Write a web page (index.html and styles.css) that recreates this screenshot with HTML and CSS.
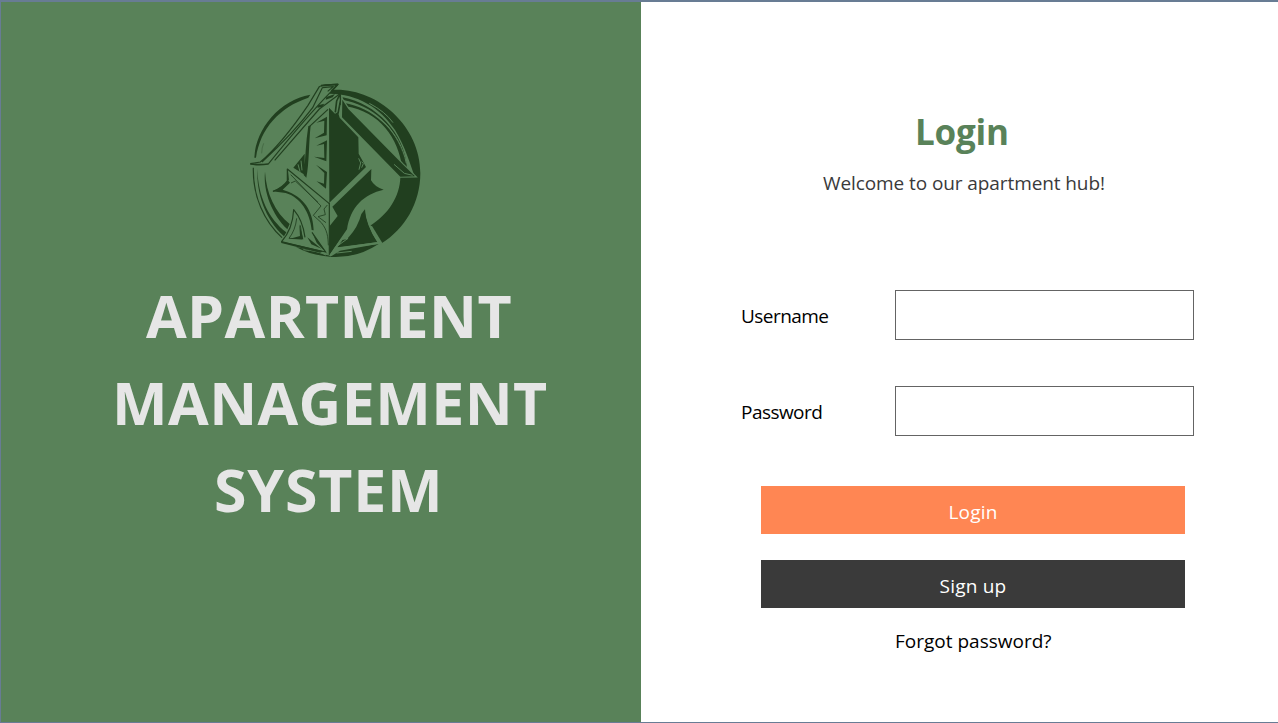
FILE: index.html
```html
<!DOCTYPE html>
<html lang="en">
<head>
<meta charset="utf-8">
<title>Apartment Management System</title>
<link rel="stylesheet" href="styles.css">
</head>
<body>
<div class="window">
  <section class="brand">
    <svg class="logo" viewBox="0 0 570 570" aria-hidden="true">
      <!-- right side of the ring -->
      <path class="ink" d="M270 45C400 32 541 145 541 294C541 385 494 462 425 505L388 454C445 418 480 365 481 306L524 304C511 270 497 217 465 165C420 96 350 57 270 56Z"/>
      <path class="ink" d="M308 67C410 87 494 175 501 279L487 279C475 190 420 110 318 94L311 83C398 98 472 165 491 245C471 156 397 90 306 74Z"/>
      <path class="cut thin" d="M388 85Q436 110 459 143M312 78C408 100 480 170 499 265"/>
      <!-- left side of the ring -->
      <path class="ink" d="M211 59C120 75 47 160 43 248L48 248C61 160 118 97 205 68Z"/>
      <path class="line faint" d="M65 235Q65 218 71 205M118 117Q150 84 183 73"/>
      <path class="line thin" d="M40 278C38 365 73 440 126 488"/>
      <path class="ink" d="M52 281C54 365 86 431 139 472L132 484C75 431 49 355 52 281Z"/>
      <path class="ink" d="M75 290C79 355 105 411 149 447L142 463C96 418 69 350 75 290Z"/>
      <!-- lower ring -->
      <path class="ink" d="M168 516Q213 523 260 540L275 543L300 527L417 506Q350 550 275 546Q212 541 168 516Z"/>
      <path class="cut thin" d="M190 524Q230 527 258 540M290 534L335 529"/>
      <!-- left blade -->
      <path class="shape" d="M31 267L61 261C111 219 163 151 204 91L238 32Q246 26 294 28Q283 41 274 49C213 111 151 185 84 268Q59 272 31 267Z"/>
      <path class="line thin" d="M31 266L61 261C111 219 163 151 204 91L238 35Q246 28 294 28Q283 41 274 49C213 111 151 185 84 268M247 38L280 35L263 49M247 38L218 98Q160 175 66 261M74 253L96 230"/>
      <path class="line" d="M31 267Q58 271 84 267M243 32L293 28L274 48"/>
      <path class="ink" d="M259 66L285 57L278 67L257 74ZM234 91L253 86L246 96L232 98Z"/>
      <path class="line thin" d="M104 256L238 102L299 57"/>
      <path class="line" d="M286 112L290 78L300 57L302 74L294 116"/>
      <!-- right blade -->
      <path class="ink edge" d="M307 74L325 102L488 268L525 304L481 305L306 127Z"/>
      <path class="cut thin" d="M462 268L493 295L518 301"/>
      <circle class="ink" cx="300" cy="87" r="3"/>
      <!-- helmet -->
      <path class="ink" d="M267 98L285 116L294 112L299 128L355 187L356 236L378 276L268 383Z"/>
      <path class="cut thin" d="M356 250L362 264L357 284M365 260L370 266L365 278"/>
      <path class="line thin" d="M264 103L208 155"/>
      <path class="ink" d="M205 153L212 152C206 200 208 266 199 308L191 300C197 250 197 200 205 153ZM194 236L194 299L160 278Z"/>
      <path class="cut thin" d="M174 268L180 290M183 257L186 286"/>
      <path class="ink" d="M229 143L261 125L260 181L224 190L252 173L253 137ZM229 212L261 196L259 259L222 245L253 249L252 207ZM228 269L261 291L258 341L230 319L252 326L253 294Z"/>
      <!-- left mask -->
      <path class="shape" d="M142 282L268 390V536L219 466C216 416 192 376 138 356L99 349Q128 339 145 314Z"/>
      <path class="line thin" d="M142 320V282L268 386M142 284L145 314Q128 339 99 349"/>
      <path class="line hair" d="M152 299L243 393L220 421L244 443C262 465 264 485 265 511M153 324L166 318L234 382M262 390L252 402L256 419L234 425L258 443"/>
      <path class="ink" d="M97 349Q128 338 144 316L150 323L128 344L145 350C201 372 220 420 221 466L215 465C210 413 182 367 137 354Z"/>
      <path class="line thin" d="M268 383V540"/>
      <!-- right mask -->
      <path class="ink" d="M394 282L393 316Q405 337 431 344C371 357 331 397 321 463L303 489L269 539V453L293 423L277 395Z"/>
      <!-- left lower horn -->
      <path class="shape" d="M160 402C156 446 145 477 124 501L257 531L216 472L195 465Q176 428 160 402Z"/>
      <path class="line thin" d="M124 501C145 477 159 446 161 404Q188 435 195 487M124 501L257 531L216 472"/>
      <path class="line hair" d="M170 430Q166 466 147 490L187 492L181 451"/>
      <path class="ink" d="M178 448L190 493L150 491L180 483ZM202 487L244 521L214 508ZM218 476L264 539L230 503ZM124 498L250 529L240 533L124 504Z"/>
      <!-- right lower horn -->
      <path class="ink" d="M376 401C377 431 391 468 413 501L286 519L307 493L324 489Q354 457 364 417Z"/>
      <path class="cut" d="M378 401C379 431 393 468 417 504L282 521M324 489L306 492L270 543"/>
      <path class="cut thin" d="M292 513L324 490"/>
      <path class="cut" d="M393 454L425 506"/>
    </svg>
    <h1 class="title">
      <span class="line-one">APARTMENT</span>
      <span class="line-two">MANAGEMENT</span>
      <span class="line-three">SYSTEM</span>
    </h1>
  </section>
  <main class="panel">
    <h2 class="heading">Login</h2>
    <p class="welcome">Welcome to our apartment hub!</p>
    <form class="form">
      <div class="field">
        <label class="label" for="user">Username</label>
        <input class="input" id="user" type="text">
      </div>
      <div class="field">
        <label class="label" for="pass">Password</label>
        <input class="input" id="pass" type="password">
      </div>
      <button class="button login" type="button">Login</button>
      <button class="button signup" type="button">Sign up</button>
      <a class="forgot">Forgot password?</a>
    </form>
  </main>
</div>
</body>
</html>
```
FILE: styles.css
```css
* { box-sizing: border-box; }
body {
  margin: 0;
  background: #fff;
  font-family: "Segoe UI", "Open Sans", "Noto Sans", sans-serif;
  font-size: 19px;
  color: #000;
}
.window {
  display: flex;
  width: 1278px;
  height: 723px;
  border: solid #687c94;
  border-width: 2px 0 1px 1px;
  overflow: hidden;
}
.brand {
  width: 640px;
  background: #598259;
  padding-top: 73px;
}
.logo { display: block; width: 190px; height: 190px; margin-left: 239px; }
.ink { fill: #213f1f; }
.shape { fill: #598259; }
.line { fill: none; stroke: #213f1f; stroke-width: 5; stroke-linejoin: round; }
.line.thin { stroke-width: 3.5; }
.line.hair { stroke-width: 2.5; }
.line.faint { stroke-width: 2; opacity: .5; }
.cut { fill: none; stroke: #598259; stroke-width: 6; }
.cut.thin { stroke-width: 3; }
.edge { stroke: #598259; stroke-width: 7; paint-order: stroke; }
.title {
  margin: 7px 0 0;
  font-size: 59px;
  line-height: 87px;
  font-weight: 700;
  letter-spacing: 0.4px;
  color: #e6e6e6;
}
.title span { display: block; white-space: nowrap; }
.line-one { margin-left: 145px; }
.line-two { margin-left: 111px; }
.line-three { margin-left: 213px; letter-spacing: 0.8px; }
.panel { width: 637px; padding-top: 104px; }
.heading {
  margin: 0 0 0 274px;
  font-size: 35px;
  line-height: 52px;
  letter-spacing: -0.2px;
  color: #598259;
}
.welcome {
  margin: 9px 0 0 182px;
  line-height: 32px;
  letter-spacing: -0.09px;
  color: #3a3a3a;
  white-space: nowrap;
}
.form { margin: 91px 0 0 100px; }
.field { display: flex; align-items: center; height: 50px; margin-bottom: 46px; }
.label { width: 154px; padding-top: 2px; letter-spacing: -0.55px; }
.input {
  width: 299px;
  height: 50px;
  border: 1px solid #646464;
  background: #fff;
  font: inherit;
}
.button {
  display: block;
  width: 424px;
  height: 48px;
  margin: 0 0 26px 20px;
  padding: 4px 0 0;
  border: 0;
  font: inherit;
  letter-spacing: 0.2px;
  color: #fff;
}
.login { margin-top: 50px; background: #ff8653; }
.signup { margin-bottom: 18px; background: #3a3a3a; }
.forgot { display: block; margin-left: 154px; line-height: 30px; white-space: nowrap; }
```
